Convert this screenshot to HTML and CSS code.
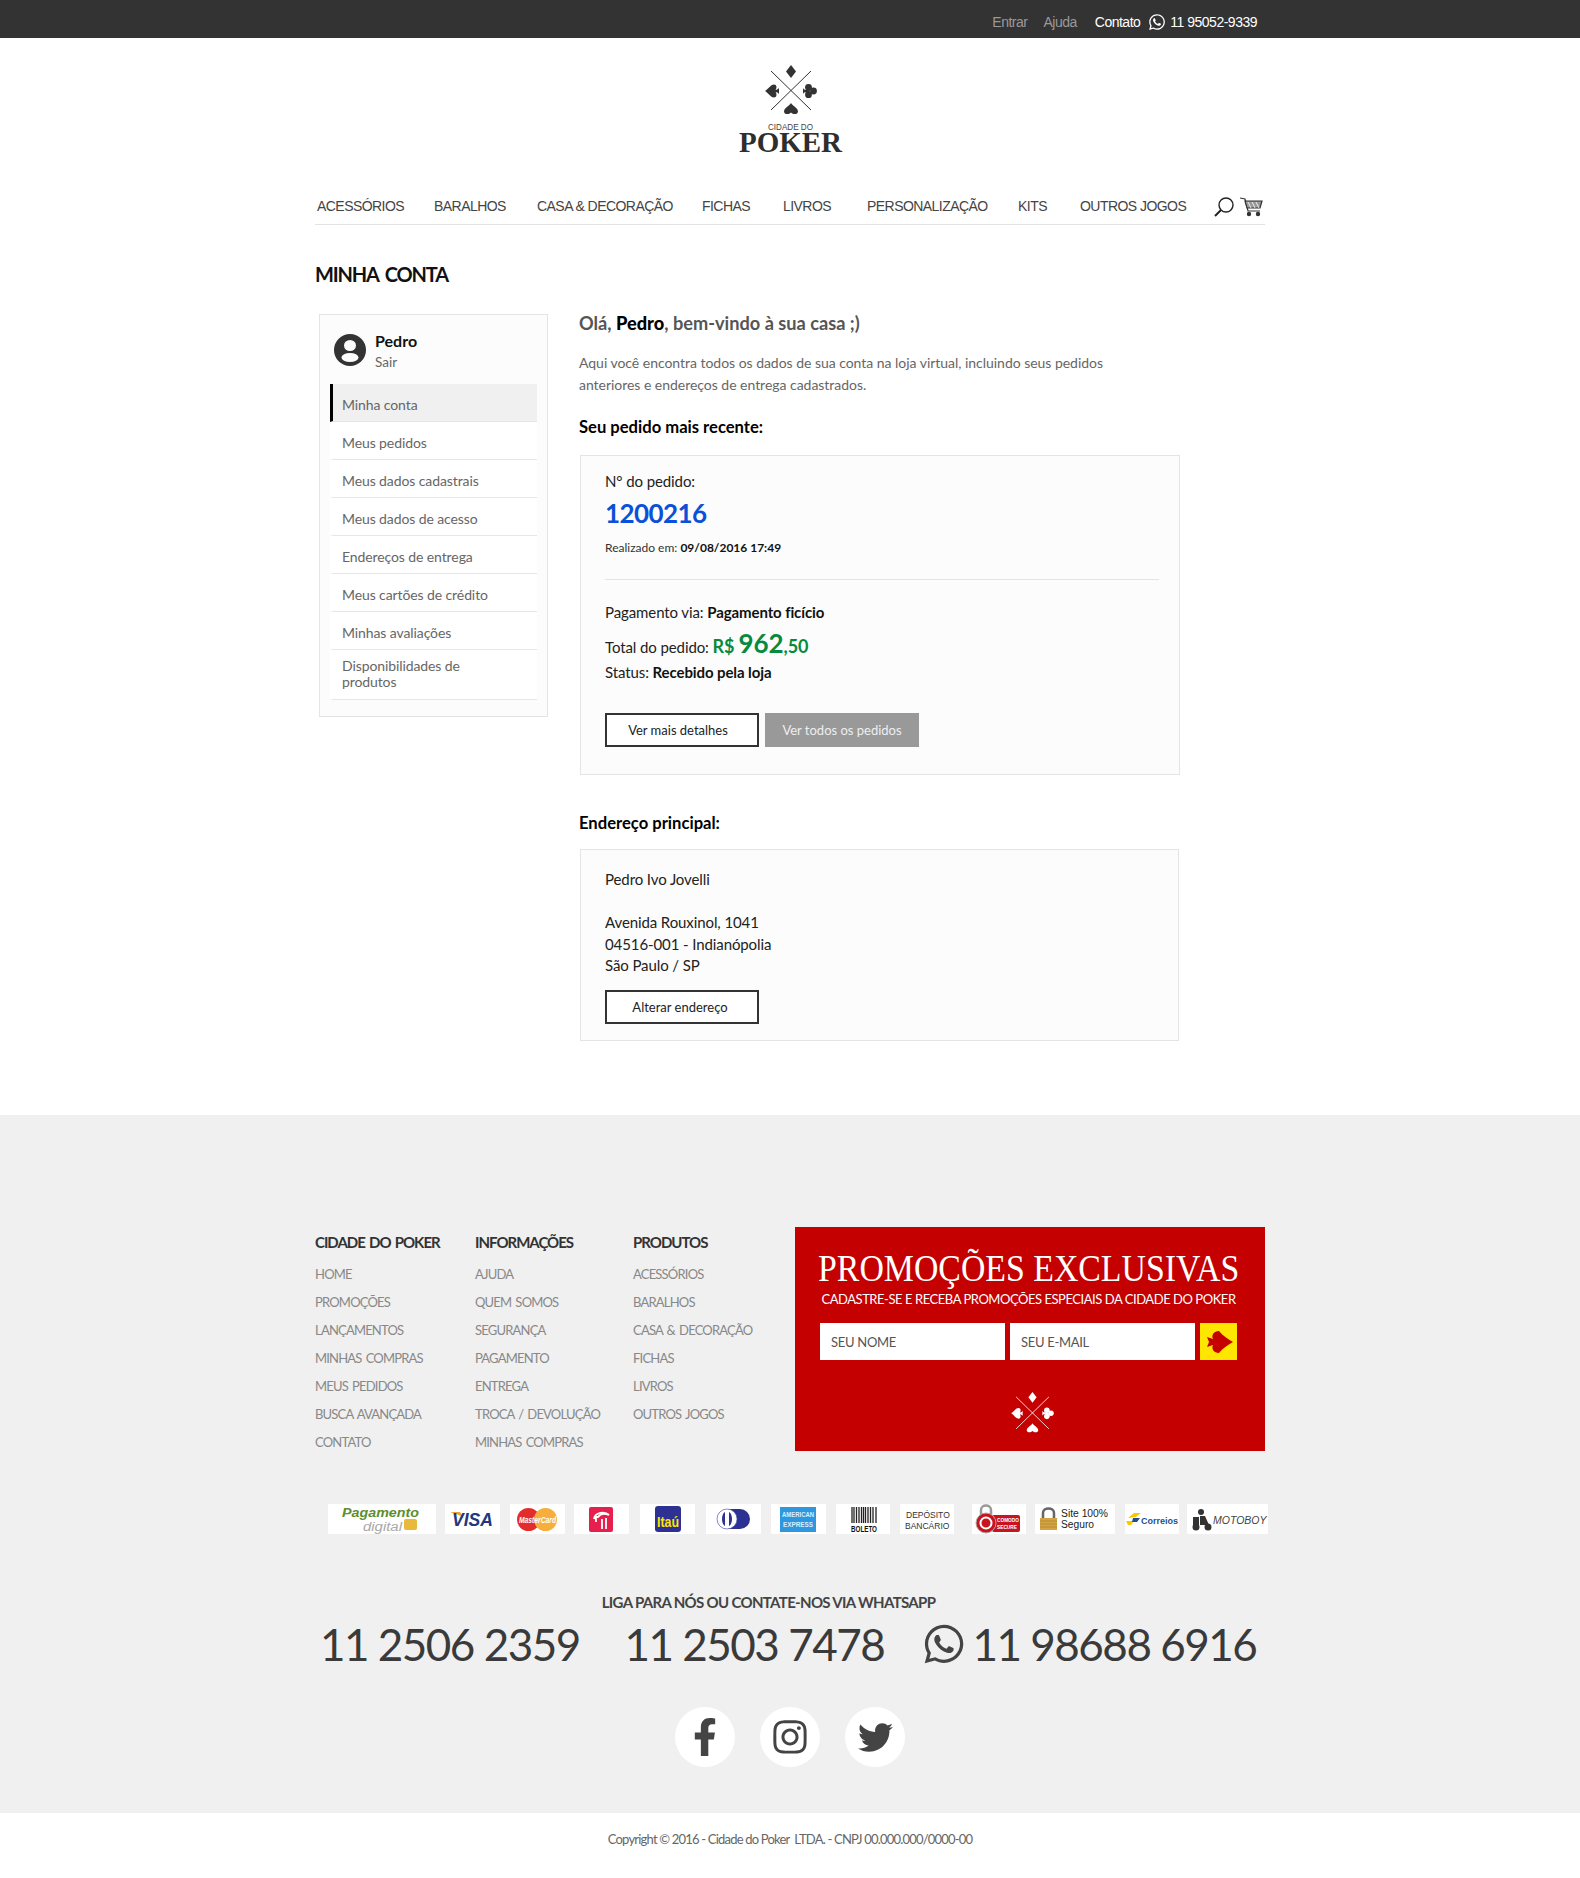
FILE: index.html
```html
<!DOCTYPE html>
<html lang="pt-BR">
<head>
<meta charset="utf-8">
<title>Cidade do Poker - Minha Conta</title>
<link rel="stylesheet" href="styles.css">
</head>
<body>
<svg class="defs" width="0" height="0" aria-hidden="true">
  <defs>
    <symbol id="wa" viewBox="0 0 448 512"><path fill="currentColor" d="M380.9 97.1C339 55.1 283.2 32 223.9 32c-122.4 0-222 99.6-222 222 0 39.1 10.2 77.3 29.6 111L0 480l117.7-30.9c32.4 17.7 68.9 27 106.1 27h.1c122.3 0 224.1-99.6 224.1-222 0-59.3-25.2-115-67.1-157zm-157 341.6c-33.2 0-65.7-8.9-94-25.7l-6.7-4-69.8 18.3L72 359.2l-4.4-7c-18.5-29.4-28.2-63.3-28.2-98.2 0-101.7 82.8-184.5 184.6-184.5 49.3 0 95.6 19.2 130.4 54.1 34.8 34.9 56.2 81.2 56.1 130.5 0 101.8-84.9 184.6-186.6 184.6zm101.2-138.2c-5.5-2.8-32.8-16.2-37.9-18-5.1-1.9-8.8-2.8-12.5 2.8-3.7 5.6-14.3 18-17.6 21.8-3.2 3.7-6.5 4.2-12 1.4-32.6-16.3-54-29.1-75.5-66-5.7-9.8 5.7-9.1 16.3-30.3 1.8-3.7.9-6.9-.5-9.7-1.4-2.8-12.5-30.1-17.1-41.2-4.5-10.8-9.1-9.3-12.5-9.5-3.2-.2-6.9-.2-10.6-.2-3.7 0-9.7 1.4-14.8 6.9-5.1 5.6-19.4 19-19.4 46.3 0 27.3 19.9 53.7 22.6 57.4 2.8 3.7 39.1 59.7 94.8 83.8 35.2 15.2 49 16.5 66.6 13.9 10.7-1.6 32.8-13.4 37.4-26.4 4.6-13 4.6-24.1 3.2-26.4-1.3-2.5-5-3.9-10.5-6.6z"/></symbol>
    <symbol id="suits" viewBox="0 0 52 50">
      <path fill="none" stroke="currentColor" stroke-width="1" d="M6 6 46 45M46 6 6 45"/>
      <g fill="currentColor">
        <path d="M26 0 31 6.500 26 13 21 6.500Z"/>
        <path transform="translate(7 26) rotate(-90)" d="M0-7C1.500-4 6.500-1.500 6.500 2 6.500 4.800 3 5.200 1 3.500 1.200 5 1.800 6 3 7H-3C-1.800 6-1.200 5-1 3.500-3 5.200-6.500 4.800-6.500 2-6.500-1.500-1.500-4 0-7Z"/>
        <g transform="translate(45 26) rotate(90)">
          <circle cx="0" cy="-3.500" r="3.400"/><circle cx="-3.700" cy="1.500" r="3.400"/><circle cx="3.700" cy="1.500" r="3.400"/>
          <path d="M-.8 0H.8L1.500 6 3 7H-3L-1.500 6Z"/>
        </g>
        <path d="M26 38C27.500 41 33 43 33 46.500 33 49.500 28.500 50 26 47.500 23.500 50 19 49.500 19 46.500 19 43 24.500 41 26 38Z"/>
      </g>
    </symbol>
  </defs>
</svg>

<header class="topbar">
  <a class="top-link muted">Entrar</a>
  <a class="top-link muted ajuda">Ajuda</a>
  <a class="top-link contact">Contato</a>
  <svg class="top-wa" width="16" height="18"><use href="#wa"/></svg>
  <span class="top-link">11 95052-9339</span>
</header>

<div class="wrap">
  <div class="logo">
    <svg class="logo-mark" width="110" height="100" viewBox="0 0 110 100">
      <use href="#suits" x="30" y="0" width="52" height="50"/>
      <text x="33" y="65" textLength="45" lengthAdjust="spacingAndGlyphs" class="logo-small">CIDADE DO</text>
      <text x="4" y="87" textLength="103" lengthAdjust="spacingAndGlyphs" class="logo-big">POKER</text>
    </svg>
  </div>

  <nav class="nav">
    <a>ACESSÓRIOS</a><a>BARALHOS</a><a>CASA &amp; DECORAÇÃO</a><a>FICHAS</a><a>LIVROS</a><a>PERSONALIZAÇÃO</a><a>KITS</a><a>OUTROS JOGOS</a>
    <div class="nav-icons">
      <svg width="22" height="20" viewBox="0 0 22 20" fill="none" stroke="#222" stroke-width="1.4"><ellipse cx="13" cy="8" rx="7" ry="7"/><path d="M8 13 2 19" stroke-width="2"/></svg>
      <svg width="23" height="20" viewBox="0 0 23 20" fill="none" stroke="#333" stroke-width="1.2"><path d="M0 1 5 2 8 14H20"/><path d="M5 4H22L20 11H7Z" fill="#999"/><path d="M8 5 11 11M12 5 15 11M16 5 19 11" stroke="#fff" stroke-width=".8"/><circle cx="9" cy="17" r="1.600" fill="#333"/><circle cx="18" cy="17" r="1.600" fill="#333"/></svg>
    </div>
  </nav>

  <h1 class="page-title">MINHA CONTA</h1>

  <div class="account">
    <aside class="side">
      <div class="user">
        <svg width="32" height="32" viewBox="0 0 32 32"><circle cx="16" cy="16" r="16" fill="#333"/><ellipse cx="16" cy="11.500" rx="6" ry="5.500" fill="#fcfcfc"/><ellipse cx="16" cy="23.500" rx="8.500" ry="4.500" fill="#fcfcfc"/></svg>
        <div class="user-text">
          <div class="user-name">Pedro</div>
          <div class="user-out">Sair</div>
        </div>
      </div>
      <ul class="menu">
        <li class="active">Minha conta</li>
        <li>Meus pedidos</li>
        <li>Meus dados cadastrais</li>
        <li>Meus dados de acesso</li>
        <li>Endereços de entrega</li>
        <li>Meus cartões de crédito</li>
        <li>Minhas avaliações</li>
        <li class="two-lines">Disponibilidades de produtos</li>
      </ul>
    </aside>

    <main class="main">
      <h2 class="greet">Olá, <b>Pedro</b>, bem-vindo à sua casa ;)</h2>
      <p class="intro">Aqui você encontra todos os dados de sua conta na loja virtual, incluindo seus pedidos<br>anteriores e endereços de entrega cadastrados.</p>
      <h3 class="sub-title first">Seu pedido mais recente:</h3>
      <section class="card order">
        <div class="label">N° do pedido:</div>
        <div class="order-no">1200216</div>
        <div class="order-date">Realizado em: <b>09/08/2016 17:49</b></div>
        <hr class="rule">
        <div class="pay">Pagamento via: <b>Pagamento ficício</b></div>
        <div class="total">Total do pedido: <span class="price">R$ <big>962</big>,50</span></div>
        <div class="status">Status: <b>Recebido pela loja</b></div>
        <div class="actions">
          <a class="btn btn-detail">Ver mais detalhes</a>
          <a class="btn grey">Ver todos os pedidos</a>
        </div>
      </section>
      <h3 class="sub-title second">Endereço principal:</h3>
      <section class="card address">
        <p class="addr">Pedro Ivo Jovelli<br><br>Avenida Rouxinol, 1041<br>04516-001 - Indianópolia<br>São Paulo / SP</p>
        <a class="btn btn-change">Alterar endereço</a>
      </section>
    </main>
  </div>
</div>

<footer class="footer">
  <div class="footer-in">
    <div class="foot-top">
      <div class="col c1">
        <h4>CIDADE DO POKER</h4>
        <a>HOME</a><a>PROMOÇÕES</a><a>LANÇAMENTOS</a><a>MINHAS COMPRAS</a><a>MEUS PEDIDOS</a><a>BUSCA AVANÇADA</a><a>CONTATO</a>
      </div>
      <div class="col c2">
        <h4>INFORMAÇÕES</h4>
        <a>AJUDA</a><a>QUEM SOMOS</a><a>SEGURANÇA</a><a>PAGAMENTO</a><a>ENTREGA</a><a>TROCA / DEVOLUÇÃO</a><a>MINHAS COMPRAS</a>
      </div>
      <div class="col c3">
        <h4>PRODUTOS</h4>
        <a>ACESSÓRIOS</a><a>BARALHOS</a><a>CASA &amp; DECORAÇÃO</a><a>FICHAS</a><a>LIVROS</a><a>OUTROS JOGOS</a>
      </div>
      <div class="promo">
        <div class="promo-title"><span>PROMOÇÕES EXCLUSIVAS</span></div>
        <div class="promo-sub">CADASTRE-SE E RECEBA PROMOÇÕES ESPECIAIS DA CIDADE DO POKER</div>
        <form class="promo-form">
          <input class="promo-input" placeholder="SEU NOME">
          <input class="promo-input" placeholder="SEU E-MAIL">
          <button class="promo-btn" type="button" aria-label="Enviar">
            <svg width="28" height="22" viewBox="0 0 28 22"><path fill="#c40000" d="M28 11C23 8 18 5 14 0 9 0 6 4 8 8L2 6 4 11 2 16 8 14C6 18 9 22 14 22 18 17 23 14 28 11Z"/></svg>
          </button>
        </form>
        <svg class="promo-mark" width="43" height="41"><use href="#suits"/></svg>
      </div>
    </div>

    <div class="pays">
      <svg width="108" height="30" class="pay-i" viewBox="0 0 108 30"><text x="14" y="12.500" textLength="77" lengthAdjust="spacingAndGlyphs" class="p-green">Pagamento</text><text x="35" y="27" textLength="39" lengthAdjust="spacingAndGlyphs" class="p-grey">digital</text><rect x="76" y="15" width="13" height="11" rx="2" fill="#e9b93c"/></svg>
      <svg width="55" height="30" class="pay-i" viewBox="0 0 55 30"><path d="M5 8H15L19 14C15 11 10 9.500 5 8Z" fill="#f2a02c"/><text x="7" y="22" textLength="41" lengthAdjust="spacingAndGlyphs" class="p-visa">VISA</text></svg>
      <svg width="55" height="30" class="pay-i" viewBox="0 0 55 30"><circle cx="18.500" cy="15.500" r="11.500" fill="#e32c2c"/><circle cx="35.500" cy="15.500" r="11.500" fill="#f7ae3c"/><text x="9" y="19" textLength="37" lengthAdjust="spacingAndGlyphs" class="p-mc">MasterCard</text></svg>
      <svg width="55" height="30" class="pay-i" viewBox="0 0 55 30"><rect x="15" y="3" width="24" height="25" rx="2" fill="#e6204c"/><path d="M20 15C21 8 31 7 35 11 30 9 26 10 24 13H22V18M28 15V25M32 14V25" fill="none" stroke="#fff" stroke-width="1.800"/></svg>
      <svg width="55" height="30" class="pay-i" viewBox="0 0 55 30"><rect x="15" y="2" width="26" height="26" rx="3" fill="#2c3192"/><text x="17" y="23" textLength="22" lengthAdjust="spacingAndGlyphs" class="p-itau">Itaú</text></svg>
      <svg width="55" height="30" class="pay-i" viewBox="0 0 55 30"><rect x="11" y="5" width="33" height="20" rx="10" fill="#2c3192"/><circle cx="21" cy="15" r="10" fill="#fff" stroke="#5a60b0" stroke-width=".6"/><path d="M19 8C15 10 15 20 19 22ZM23 8C27 10 27 20 23 22Z" fill="#2c3192"/></svg>
      <svg width="55" height="30" class="pay-i" viewBox="0 0 55 30"><rect width="36" height="25" y="3" x="9" fill="#2f97de"/><text x="11" y="13" textLength="32" lengthAdjust="spacingAndGlyphs" class="p-amex">AMERICAN</text><text x="12" y="23" textLength="30" lengthAdjust="spacingAndGlyphs" class="p-amex">EXPRESS</text></svg>
      <svg width="54" height="30" class="pay-i" viewBox="0 0 54 30"><path d="M16 3V19M18 3V19M20.500 3V19M23 3V19M25.500 3V19M27.500 3V19M29.500 3V19M32 3V19M34.500 3V19M37 3V19M40 3V19" stroke="#222" stroke-width="1.300"/><text x="15" y="28" textLength="26" lengthAdjust="spacingAndGlyphs" class="p-bol">BOLETO</text></svg>
      <svg width="54" height="30" class="pay-i" viewBox="0 0 54 30"><text x="6" y="14" class="p-dep">DEPÓSITO</text><text x="5" y="25" class="p-dep">BANCÁRIO</text></svg>
      <svg width="54" height="30" class="pay-i" viewBox="0 0 54 30"><path d="M9 12V6C9 0 19 0 19 6V12" fill="none" stroke="#999" stroke-width="2.500"/><rect x="20" y="11" width="28" height="17" rx="2" fill="#c8141e"/><circle cx="14" cy="19" r="10" fill="#c8141e" stroke="#aaa" stroke-width="1"/><circle cx="14" cy="19" r="5.500" fill="none" stroke="#fff" stroke-width="2"/><text x="25" y="18" textLength="22" lengthAdjust="spacingAndGlyphs" class="p-com">COMODO</text><text x="25" y="25" textLength="20" lengthAdjust="spacingAndGlyphs" class="p-com">SECURE</text></svg>
      <svg width="80" height="30" class="pay-i" viewBox="0 0 80 30"><path d="M8 14V9C8 3 19 3 19 9V14" fill="none" stroke="#666" stroke-width="2.500"/><rect x="5" y="14" width="17" height="12" fill="#d4a444"/><path d="M5 17H22M5 20H22M5 23H22" stroke="#b58a2e"/><text x="26" y="12.800" textLength="47" lengthAdjust="spacingAndGlyphs" class="p-site">Site 100%</text><text x="26" y="24" textLength="33" lengthAdjust="spacingAndGlyphs" class="p-site">Seguro</text></svg>
      <svg width="54" height="30" class="pay-i" viewBox="0 0 54 30"><path d="M3 14 9 9H16L11 13Z" fill="#f7c900"/><path d="M1 17H9L6 21H3Z" fill="#f7c900"/><path d="M8 14H15L12 18H7Z" fill="#1c4f94"/><text x="16" y="20" class="p-cor">Correios</text></svg>
      <svg width="81" height="30" class="pay-i" viewBox="0 0 81 30"><circle cx="14" cy="8" r="3" fill="#333"/><path d="M6 13H12V21H6ZM13 12H18L22 21H13Z" fill="#333"/><circle cx="9" cy="23" r="3.500" fill="#333"/><circle cx="21" cy="23" r="3.500" fill="#333"/><text x="26" y="20" class="p-moto">MOTOBOY</text></svg>
    </div>

    <div class="call">LIGA PARA NÓS OU CONTATE-NOS VIA WHATSAPP</div>
    <div class="phones">
      <span class="phone p1">11 2506 2359</span>
      <span class="phone p2">11 2503 7478</span>
      <svg class="phone-wa" width="40" height="44"><use href="#wa"/></svg>
      <span class="phone">11 98688 6916</span>
    </div>

    <div class="socials">
      <a class="soc"><svg width="24" height="38" viewBox="0 0 320 512"><path fill="#444" d="M279.14 288l14.22-92.66h-88.91v-60.13c0-25.35 12.42-50.06 52.24-50.06h40.42V6.26S260.43 0 225.36 0c-73.22 0-121.08 44.38-121.08 124.72v70.62H22.89V288h81.39v224h100.17V288z"/></svg></a>
      <a class="soc"><svg width="34" height="38" viewBox="0 0 448 512"><path fill="#444" d="M224.1 141c-63.6 0-114.9 51.3-114.9 114.9s51.3 114.9 114.9 114.9S339 319.5 339 255.9 287.7 141 224.1 141zm0 189.6c-41.1 0-74.7-33.5-74.7-74.7s33.5-74.7 74.7-74.7 74.7 33.5 74.7 74.7-33.6 74.7-74.7 74.7zm146.4-194.3c0 14.9-12 26.8-26.8 26.8-14.9 0-26.8-12-26.8-26.8s12-26.8 26.8-26.8 26.8 12 26.8 26.8zm76.1 27.2c-1.7-35.9-9.9-67.7-36.2-93.9-26.2-26.2-58-34.4-93.9-36.2-37-2.1-147.9-2.1-184.9 0-35.8 1.7-67.6 9.9-93.9 36.1s-34.4 58-36.2 93.9c-2.1 37-2.1 147.9 0 184.9 1.7 35.9 9.9 67.7 36.2 93.9s58 34.4 93.9 36.2c37 2.1 147.9 2.1 184.9 0 35.9-1.7 67.7-9.9 93.9-36.2 26.2-26.2 34.4-58 36.2-93.9 2.1-37 2.1-147.8 0-184.8zM398.8 388c-7.8 19.6-22.9 34.7-42.6 42.6-29.5 11.7-99.5 9-132.1 9s-102.7 2.6-132.1-9c-19.6-7.8-34.7-22.9-42.6-42.6-11.7-29.5-9-99.5-9-132.1s-2.6-102.7 9-132.1c7.8-19.6 22.9-34.7 42.6-42.6 29.5-11.7 99.5-9 132.1-9s102.7-2.6 132.1 9c19.6 7.8 34.7 22.9 42.6 42.6 11.7 29.5 9 99.5 9 132.1s2.7 102.7-9 132.1z"/></svg></a>
      <a class="soc"><svg width="35" height="35" viewBox="0 0 512 512"><path fill="#444" d="M459.37 151.716c.325 4.548.325 9.097.325 13.645 0 138.72-105.583 298.558-298.558 298.558-59.452 0-114.68-17.219-161.137-47.106 8.447.974 16.568 1.299 25.34 1.299 49.055 0 94.213-16.568 130.274-44.832-46.132-.975-84.792-31.188-98.112-72.772 6.498.974 12.995 1.624 19.818 1.624 9.421 0 18.843-1.3 27.614-3.573-48.081-9.747-84.143-51.98-84.143-102.985v-1.299c13.969 7.797 30.214 12.67 47.431 13.319-28.264-18.843-46.781-51.005-46.781-87.391 0-19.492 5.197-37.36 14.294-52.954 51.655 63.675 129.3 105.258 216.365 109.807-1.624-7.797-2.599-15.918-2.599-24.04 0-57.828 46.782-104.934 104.934-104.934 30.213 0 57.502 12.67 76.67 33.137 23.715-4.548 46.456-13.32 66.599-25.34-7.798 24.366-24.366 44.833-46.132 57.827 21.117-2.273 41.584-8.122 60.426-16.243-14.292 20.791-32.161 39.308-52.628 54.253z"/></svg></a>
    </div>
  </div>
</footer>

<div class="copy">Copyright © 2016 - Cidade do Poker  LTDA. - CNPJ 00.000.000/0000-00</div>
</body>
</html>
```
FILE: styles.css
```css
* { box-sizing: border-box; }
html, body { margin: 0; padding: 0; }
body { background: #fff; color: #333; font-family: "Lato", "Open Sans", sans-serif; font-size: 14px; }
a { color: inherit; text-decoration: none; }
.defs { position: absolute; }

/* top bar */
.topbar { height: 38px; background: #333; display: flex; justify-content: flex-end; align-items: center; padding-right: 323px; padding-top: 6px; font-family: "Liberation Sans", Arial, sans-serif; font-size: 14px; letter-spacing: -.5px; color: #fff; }
.top-link { line-height: 20px; }
.muted { color: #999; }
.ajuda { margin-left: 16px; }
.contact { margin-left: 18px; }
.top-wa { margin: 0 5px 0 9px; color: #fff; }

.wrap { width: 950px; margin: 0 auto; }

/* logo */
.logo { height: 150px; padding-top: 27px; color: #333; }
.logo-mark { display: block; margin: 0 auto; color: #333; }
.logo-small { font: 9px "Liberation Sans", Arial, sans-serif; fill: #444; }
.logo-big { font: bold 29px "Liberation Serif", serif; fill: #2e2e2e; }

/* nav */
.nav { display: grid; grid-template-columns: 117px 103px 165px 81px 84px 151px 62px 133px 1fr; height: 37px; padding-left: 2px; border-bottom: 1px solid #e3e3e3; font-family: "Liberation Sans", Arial, sans-serif; font-size: 14px; letter-spacing: -.55px; line-height: 36px; color: #444; }
.nav-icons { display: flex; gap: 5px; align-items: center; padding-top: 2px; }
.nav-icons svg { flex: none; }

.page-title { margin: 34px 0 22px; font-size: 20px; line-height: 30px; font-weight: 700; color: #111; letter-spacing: -1.15px; word-spacing: 3px; }

/* account layout */
.account { display: flex; align-items: flex-start; height: 804px; }
.side { width: 229px; margin: 3px 0 0 4px; padding: 0 10px 16px; background: #fcfcfc; border: 1px solid #e4e4e4; }
.user { display: flex; height: 69px; padding: 19px 0 0 4px; }
.user-text { margin: -2px 0 0 9px; }
.user-name { font-size: 16px; line-height: 18px; font-weight: 700; color: #111; }
.user-out { font-size: 13.5px; line-height: 20px; color: #666; margin-top: 2px; }
.menu { list-style: none; margin: 0; padding: 0; background: #fff; }
.menu li { height: 38px; padding-left: 9px; border-left: 3px solid transparent; border-bottom: 1px solid #e6e6e6; font-size: 14px; letter-spacing: -.1px; line-height: 41px; color: #666; }
.menu li.active { background: #f0f0f0; border-left-color: #000; }
.menu li.two-lines { height: 50px; padding-top: 8px; line-height: 16px; padding-right: 40px; }

.main { width: 602px; margin-left: 31px; }
.greet { margin: 0; font-size: 18.2px; line-height: 24px; font-weight: 700; color: #555; }
.greet b { color: #000; }
.intro { margin: 17px 0 0; font-size: 14px; letter-spacing: -.03px; line-height: 22px; color: #666; }
.sub-title { margin: 0; font-size: 16.6px; line-height: 24px; font-weight: 700; color: #000; }
.first { margin-top: 19px; }
.second { margin-top: 36px; }

.card { width: 600px; margin: 16px 0 0 1px; padding: 15px 20px 27px 24px; background: #fcfcfc; border: 1px solid #e4e4e4; color: #222; }
.address { width: 599px; margin-top: 14px; padding: 19px 20px 16px 24px; }
.label, .pay, .status { font-size: 15px; letter-spacing: -.1px; line-height: 22px; }
.label { margin-top: -1px; }
.order-no { margin-top: 4px; font-size: 26px; letter-spacing: -.6px; line-height: 34px; font-weight: 700; color: #0b50d8; }
.order-date { margin-top: 9px; font-size: 12px; line-height: 18px; color: #333; }
.order-date b { color: #111; }
.rule { margin: 22px 0 0; height: 1px; border: 0; background: #e4e4e4; }
.pay { margin-top: 21px; }
.pay b, .status b { color: #111; }
.total { height: 30px; margin-top: 5px; font-size: 15px; letter-spacing: -.1px; line-height: 30px; }
.price { font-size: 18px; font-weight: 700; color: #068a3e; line-height: 30px; }
.price big { font-size: 26px; line-height: 30px; }
.status { margin-top: 3px; }
.actions { display: flex; gap: 6px; margin-top: 30px; }
.btn { display: block; width: 154px; height: 34px; border: 2px solid #333; background: #fff; text-align: center; font-size: 13px; line-height: 30px; color: #222; }
.btn-detail { padding-right: 8px; }
.btn-change { padding-right: 4px; }
.btn.grey { background: #999; border-color: #999; color: #eee; }
.addr { margin: 0 0 13px; font-size: 15px; letter-spacing: -.1px; line-height: 21.5px; }

/* footer */
.footer { height: 698px; background: #f0f0f0; padding-top: 112px; }
.footer-in { width: 950px; margin: 0 auto; }
.foot-top { display: flex; height: 224px; }
.col { display: flex; flex-direction: column; }
.c1 { width: 160px; }
.c2 { width: 158px; }
.c3 { width: 162px; }
.col h4 { margin: 0 0 3px; font-size: 15px; letter-spacing: -1px; word-spacing: 1.5px; line-height: 30px; font-weight: 700; color: #333; }
.col a { font-size: 13px; letter-spacing: -.8px; word-spacing: 1.5px; line-height: 28px; color: #888; }
.promo { width: 470px; background: #c40000; padding: 20px 28px 0 25px; text-align: center; color: #fff; }
.promo-title { display: flex; justify-content: center; height: 42px; font-family: "Liberation Serif", serif; font-size: 38px; line-height: 42px; white-space: nowrap; }
.promo-title span { flex: none; transform: scaleX(.89); }
.promo-sub { font-size: 13px; letter-spacing: -.45px; line-height: 20px; white-space: nowrap; }
.promo-form { display: flex; gap: 5px; margin-top: 14px; }
.promo-input { width: 185px; height: 37px; padding: 0 11px; border: 0; background: #fff; font: 13px "Lato", sans-serif; letter-spacing: -.3px; color: #555; }
.promo-input::placeholder { color: #555; opacity: 1; }
.promo-btn { width: 37px; height: 37px; padding: 0; border: 0; background: #ffe600; display: flex; align-items: center; justify-content: center; }
.promo-mark { display: block; margin: 32px 0 0 191px; color: #fff; }

.pays { display: grid; grid-template-columns: 117px 65px 64px 66px 66px 65px 65px 64px 72px 63px 90px 62px 81px; height: 30px; margin-top: 53px; margin-left: 13px; }
.pay-i { display: block; background: #fff; }
.p-green { font: italic bold 13.5px "Liberation Sans", sans-serif; fill: #5b8f2f; }
.p-grey { font: italic 12.5px "Liberation Sans", sans-serif; fill: #a8a8a8; }
.p-visa { font: italic bold 19px "Liberation Sans", sans-serif; fill: #23377e; }
.p-mc { font: italic bold 8.5px "Liberation Sans", sans-serif; fill: #fff; }
.p-itau { font: bold 14px "Liberation Sans", sans-serif; fill: #ffe600; }
.p-amex { font: bold 7px "Liberation Sans", sans-serif; fill: #d9efff; }
.p-bol { font: bold 9px "Liberation Sans", sans-serif; fill: #111; }
.p-dep { font: 8.5px "Liberation Sans", sans-serif; fill: #333; }
.p-com { font: bold 5.5px "Liberation Sans", sans-serif; fill: #fff; }
.p-site { font: 10px "Liberation Sans", sans-serif; fill: #222; }
.p-cor { font: bold 9px "Liberation Sans", sans-serif; fill: #1c4f94; }
.p-moto { font: italic 10.5px "Liberation Sans", sans-serif; fill: #444; }

.call { margin-top: 58px; margin-right: 43px; font-size: 15px; letter-spacing: -.67px; line-height: 20px; font-weight: 700; color: #444; text-align: center; }
.phones { display: flex; align-items: center; height: 50px; margin-top: 7px; padding-left: 5px; color: #3a3a3a; }
.phone { font-size: 44px; letter-spacing: -1.5px; line-height: 50px; white-space: nowrap; }
.p1 { width: 304.5px; }
.p2 { width: 299px; }
.phone-wa { margin-right: 9px; color: #444; }
.socials { display: flex; justify-content: center; gap: 25px; margin-top: 38px; }
.soc { width: 60px; height: 60px; border-radius: 50%; background: #fff; display: flex; align-items: center; justify-content: center; }

.copy { height: 65px; text-align: center; font-size: 13px; letter-spacing: -.8px; line-height: 52px; color: #666; white-space: pre; }
```
